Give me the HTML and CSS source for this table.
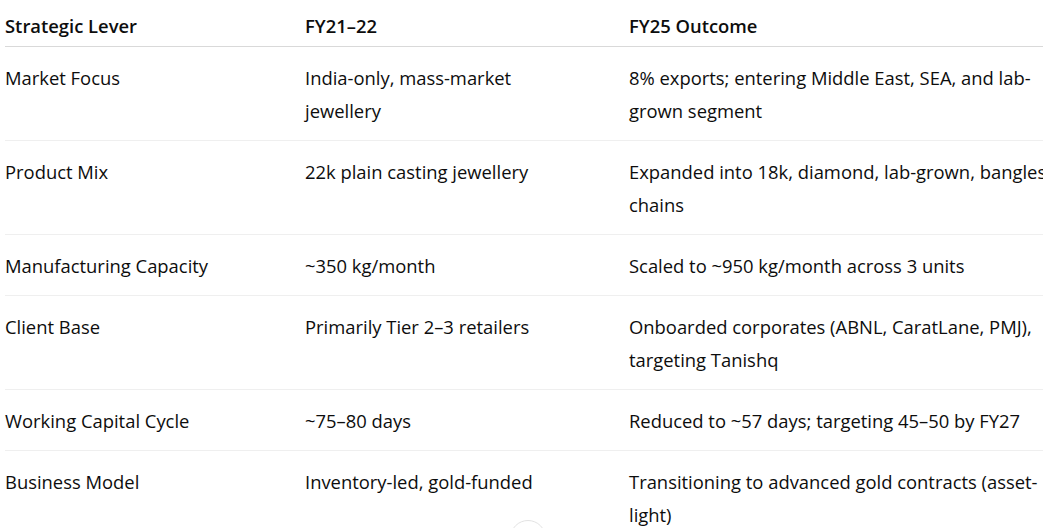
FILE: index.html
```html
<!DOCTYPE html>
<html lang="en">
<head>
<meta charset="utf-8">
<title>Strategic Levers</title>
<link rel="stylesheet" href="styles.css">
</head>
<body>
<main class="page">
  <div class="table-wrap">
    <table class="levers">
      <colgroup>
        <col class="c1"><col class="c2"><col class="c3">
      </colgroup>
      <thead>
        <tr><th>Strategic Lever</th><th>FY21–22</th><th>FY25 Outcome</th></tr>
      </thead>
      <tbody>
        <tr><td>Market Focus</td><td>India-only, mass-market jewellery</td><td>8% exports; entering Middle East, SEA, and lab-grown segment</td></tr>
        <tr><td>Product Mix</td><td>22k plain casting jewellery</td><td>Expanded into 18k, diamond, lab-grown, bangles, chains</td></tr>
        <tr><td>Manufacturing Capacity</td><td>~350 kg/month</td><td>Scaled to ~950 kg/month across 3 units</td></tr>
        <tr><td>Client Base</td><td>Primarily Tier 2–3 retailers</td><td>Onboarded corporates (ABNL, CaratLane, PMJ), targeting Tanishq</td></tr>
        <tr><td>Working Capital Cycle</td><td>~75–80 days</td><td>Reduced to ~57 days; targeting 45–50 by FY27</td></tr>
        <tr><td>Business Model</td><td>Inventory-led, gold-funded</td><td>Transitioning to advanced gold contracts (asset-light)</td></tr>
      </tbody>
    </table>
  </div>
  <button class="scroll-down" aria-label="Scroll down"></button>
</main>
</body>
</html>
```
FILE: styles.css
```css
html, body {
  margin: 0;
  padding: 0;
  background: #ffffff;
  overflow: hidden;
}
.page {
  position: relative;
  width: 1043px;
  height: 528px;
  overflow: hidden;
  font-family: "Open Sans", "Noto Sans", sans-serif;
  font-size: 18.4px;
  line-height: 33px;
  color: #0d0d0d;
}
.table-wrap {
  padding-left: 5px;
}
.levers {
  border-collapse: collapse;
  table-layout: fixed;
  width: 1104px;
}
.c1 { width: 300px; }
.c2 { width: 324px; }
.c3 { width: 480px; }
.levers th {
  text-align: left;
  font-weight: 600;
  padding: 9px 48px 4px 0;
  border-bottom: 1px solid #d9d9d9;
  vertical-align: top;
}
.levers td {
  text-align: left;
  font-weight: 400;
  padding: 13.5px 48px 13.5px 0;
  border-bottom: 1px solid #efefef;
  vertical-align: top;
}
.levers tbody tr:last-child td {
  border-bottom: none;
}
.scroll-down {
  position: absolute;
  left: 510px;
  top: 520px;
  width: 36px;
  height: 36px;
  border-radius: 50%;
  border: 1px solid #e3e3e3;
  background: #ffffff;
  padding: 0;
}
```
